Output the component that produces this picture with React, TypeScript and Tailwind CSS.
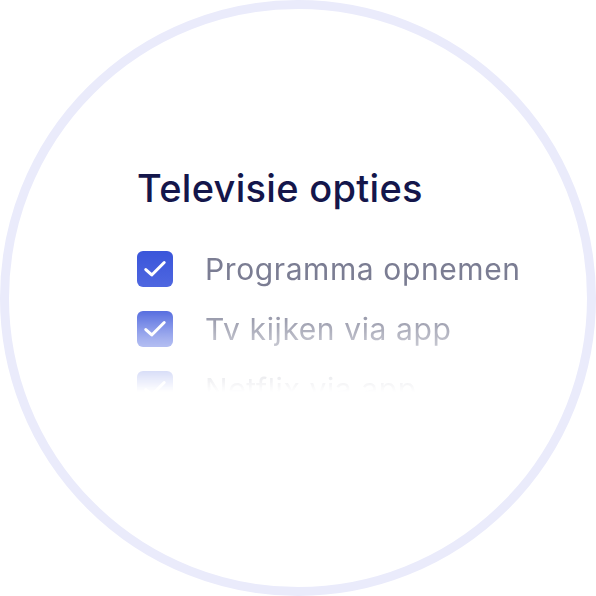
import React from "react";

const options = ["Programma opnemen", "Tv kijken via app", "Netflix via app"];

function CheckBox() {
  return (
    <div className="w-9 h-9 rounded-[6px] bg-gradient-to-b from-[#3a55da] to-[#4f67e0] flex items-center justify-center shrink-0">
      <svg width="26" height="26" viewBox="0 0 24 24" fill="none">
        <path
          d="M3.5 12.5 L9 17.5 L20.5 6"
          stroke="white"
          strokeWidth="2.8"
          strokeLinecap="round"
          strokeLinejoin="round"
        />
      </svg>
    </div>
  );
}

export default function App() {
  return (
    <div className="w-[596px] h-[596px] bg-white" style={{ fontFamily: "Inter, 'Noto Sans', sans-serif" }}>
      <div className="w-[596px] h-[596px] rounded-full border-[9px] border-[#eaebfb] bg-white overflow-hidden">
        <div className="pl-[128px] pt-[156px]">
          <h1 className="text-[38px] leading-[46px] font-medium text-[#14164b] tracking-[0.3px]">
            Televisie opties
          </h1>
          <ul className="mt-[40px] flex flex-col gap-6 [mask-image:linear-gradient(to_bottom,black_0%,black_30%,rgba(0,0,0,0.5)_55%,transparent_88%)] h-[160px]">
            {options.map((o) => (
              <li key={o} className="flex items-center gap-8 h-9">
                <CheckBox />
                <span className="text-[30px] leading-9 text-[#7b7d93] tracking-[0.6px]">{o}</span>
              </li>
            ))}
          </ul>
        </div>
      </div>
    </div>
  );
}
